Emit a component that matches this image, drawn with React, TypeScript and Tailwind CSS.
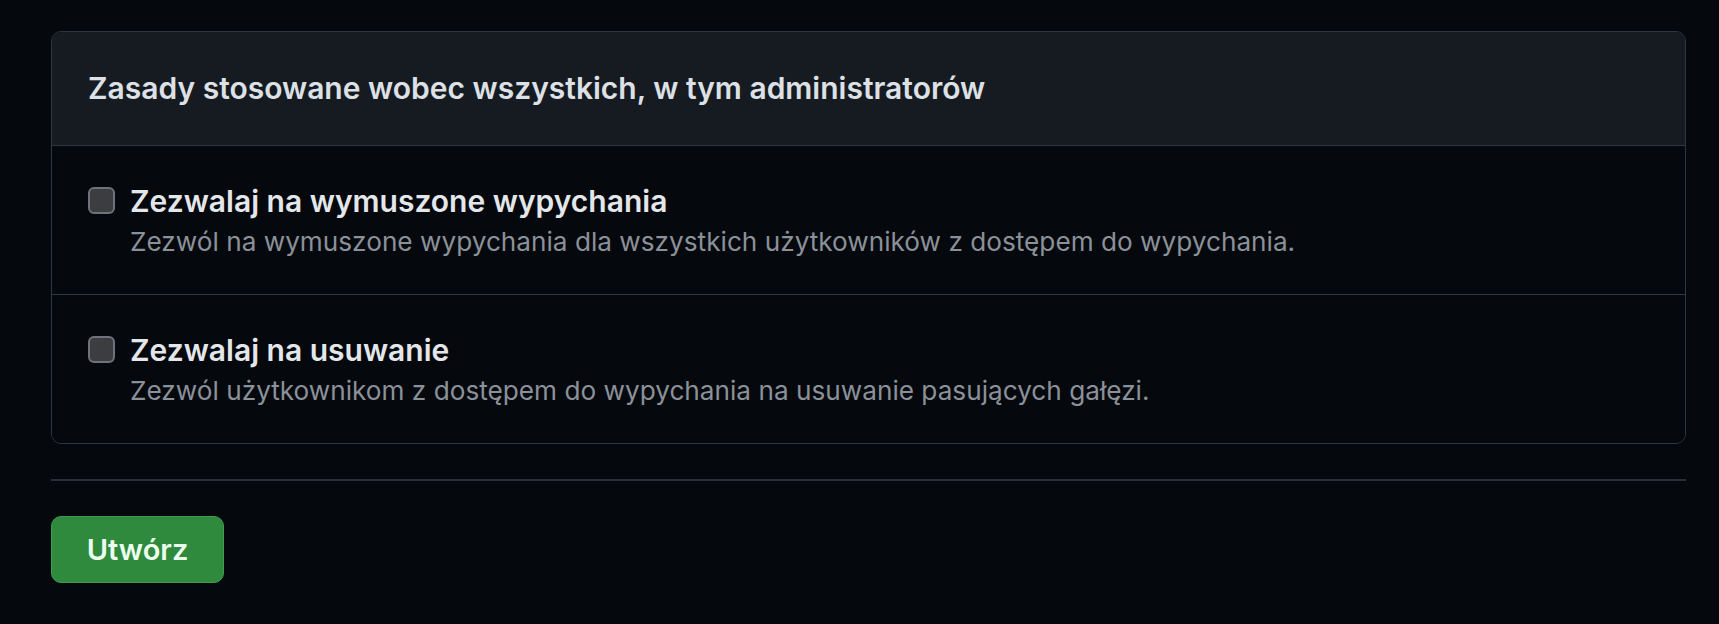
import React from "react";

function Row({ title, desc, last }: { title: string; desc: string; last?: boolean }) {
  return (
    <div className={`flex items-start gap-[16px] px-[36px] pt-[37px] pb-[32px] bg-[#05080d] ${last ? "" : "border-b border-[#30363d]"}`}>
      <div className="mt-[4px] w-[27px] h-[27px] shrink-0 rounded-[6px] border-2 border-[#6f7379] bg-[#3c3d40]" />
      <div className="flex flex-col -ml-[1px]">
        <div className="text-[30px] leading-[36px] font-semibold text-[#e4e7ea]">{title}</div>
        <div className="mt-[3px] text-[26.2px] leading-[40px] text-[#8b9199]">{desc}</div>
      </div>
    </div>
  );
}

export default function App() {
  return (
    <div className="min-h-[624px] w-full bg-[#05080c] pt-[31px] pl-[51px] pr-[33px]" style={{ fontFamily: "Inter, 'Noto Sans', sans-serif" }}>
      <div className="rounded-[10px] border border-[#30363d] overflow-hidden">
        <div className="h-[114px] flex items-center px-[36px] bg-[#161b22] border-b border-[#30363d]">
          <div className="text-[30px] font-semibold text-[#dde1e6]">Zasady stosowane wobec wszystkich, w tym administratorów</div>
        </div>
        <Row
          title="Zezwalaj na wymuszone wypychania"
          desc="Zezwól na wymuszone wypychania dla wszystkich użytkowników z dostępem do wypychania."
        />
        <Row
          title="Zezwalaj na usuwanie"
          desc="Zezwól użytkownikom z dostępem do wypychania na usuwanie pasujących gałęzi."
          last
        />
      </div>
      <div className="mt-[35px] border-t-2 border-[#2a2f36]" />
      <button className="mt-[35px] h-[67px] w-[173px] rounded-[10px] border border-[#409c4f] bg-[#2f8a3e] text-[29px] font-semibold text-[#ecffee]">
        Utwórz
      </button>
    </div>
  );
}
